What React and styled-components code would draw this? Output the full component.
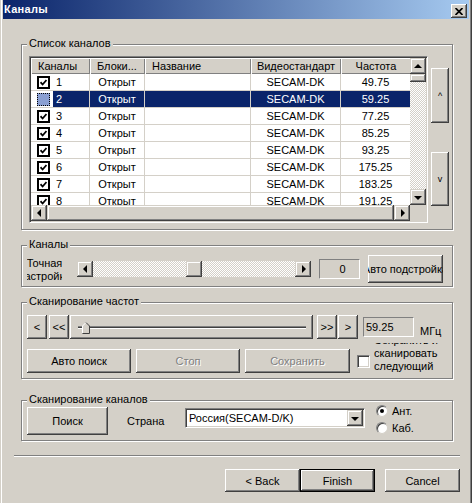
import React from 'react'
import styled, { createGlobalStyle } from 'styled-components'

const FACE = '#d4d0c8'
const SHADOW = '#808080'
const DARK = '#404040'
const NAVY = '#0a246a'
const FONT = '"Liberation Sans", Arial, sans-serif'

const columns = [
    { key: 'ch', title: 'Каналы', w: 59, head: 'left' },
    { key: 'lock', title: 'Блоки...', w: 55, head: 'left' },
    { key: 'name', title: 'Название', w: 106, head: 'left' },
    { key: 'std', title: 'Видеостандарт', w: 90, head: 'center' },
    { key: 'freq', title: 'Частота', w: 70, head: 'center' },
]

const channels = [
    { n: 1, freq: '49.75', on: true },
    { n: 2, freq: '59.25', on: false, selected: true },
    { n: 3, freq: '77.25', on: true },
    { n: 4, freq: '85.25', on: true },
    { n: 5, freq: '93.25', on: true },
    { n: 6, freq: '175.25', on: true },
    { n: 7, freq: '183.25', on: true },
    { n: 8, freq: '191.25', on: true },
]

function App() {
  return (
    <>
      <GlobalStyle />
      <Window>
        <TitleBar>
          <TitleText>Каналы</TitleText>
          <CloseButton>
            <svg width="8" height="7" viewBox="0 0 8 7">
              <path d="M0.5 0 L7.5 7 M7.5 0 L0.5 7" stroke="#000" strokeWidth="1.7" />
            </svg>
          </CloseButton>
        </TitleBar>

        <Body>
          <Group $h={186} $mt={25} $pad="11px 0 0 7px">
            <Caption>Список каналов</Caption>
            <ListRow>
              <ListView>
                <Viewport>
                  <HeaderRow>
                    {columns.map(c => (
                      <HeaderCell key={c.key} $w={c.w} $align={c.head}>{c.title}</HeaderCell>
                    ))}
                  </HeaderRow>
                  {channels.map(ch => (
                    <Row key={ch.n}>
                      <FirstCell $w={columns[0].w}>
                        <ListCheck $selected={ch.selected}>
                          {ch.on && <CheckMark />}
                        </ListCheck>
                        <Highlight $selected={ch.selected}>{ch.n}</Highlight>
                      </FirstCell>
                      <Cell $w={columns[1].w} $selected={ch.selected}>Открыт</Cell>
                      <Cell $w={columns[2].w} $selected={ch.selected}></Cell>
                      <Cell $w={columns[3].w} $selected={ch.selected}>SECAM-DK</Cell>
                      <Cell $w={columns[4].w} $selected={ch.selected}>{ch.freq}</Cell>
                    </Row>
                  ))}
                </Viewport>
                <VScroll>
                  <ScrollArrow><Tri $dir="up" /></ScrollArrow>
                  <Thumb $size={8} />
                  <Track />
                  <ScrollArrow><Tri $dir="down" /></ScrollArrow>
                </VScroll>
                <HScroll>
                  <ScrollArrow><Tri $dir="left" /></ScrollArrow>
                  <Thumb $grow />
                  <ScrollArrow><Tri $dir="right" /></ScrollArrow>
                </HScroll>
                <Corner />
              </ListView>
              <SideButtons>
                <Button $w={18} $h={55} $small>^</Button>
                <Button $w={18} $h={54} $small>v</Button>
              </SideButtons>
            </ListRow>
          </Group>

          <Group $h={42} $mt={15} $pad="9px 0 3px 5px" $row>
            <Caption>Каналы</Caption>
            <FineLabel>
              <span>Точная</span>
              <span>настройка</span>
            </FineLabel>
            <HScrollBar $w={234} $ml={15}>
              <ScrollArrow><Tri $dir="left" /></ScrollArrow>
              <Track $row>
                <Thumb $size={16} $offset={93} />
              </Track>
              <ScrollArrow><Tri $dir="right" /></ScrollArrow>
            </HScrollBar>
            <ValueBox $w={41} $h={20} $ml={8} $center>0</ValueBox>
            <Button $w={75} $h={28} $ml={8}>Авто подстройка</Button>
          </Group>

          <Group $h={77} $mt={15} $pad="12px 0 0 5px">
            <Caption>Сканирование частот</Caption>
            <ToolRow>
              <Button $w={20} $h={24}>&lt;</Button>
              <Button $w={20} $h={24} $ml={2}>&lt;&lt;</Button>
              <Slider>
                <SliderLine>
                  <SliderThumb width="8" height="12" viewBox="0 0 8 12">
                    <path d="M0.5 11.5 V4 L4 0.5 L7.5 4 V11.5 Z" fill={FACE} />
                    <path d="M0.5 11 V4 L4 0.5" stroke="#fff" fill="none" />
                    <path d="M4 0.5 L7.5 4 V11.5 H0.5" stroke={DARK} fill="none" />
                  </SliderThumb>
                </SliderLine>
              </Slider>
              <Button $w={20} $h={24} $ml={4}>&gt;&gt;</Button>
              <Button $w={20} $h={24} $ml={1}>&gt;</Button>
              <ValueBox $w={51} $h={20} $ml={5}>59.25</ValueBox>
              <Unit>МГц</Unit>
            </ToolRow>
            <ToolRow>
              <Button $w={104} $h={24}>Авто поиск</Button>
              <Button $w={104} $h={24} $ml={5} disabled>Стоп</Button>
              <Button $w={105} $h={24} $ml={5} disabled>Сохранить</Button>
              <Check $ml={7} />
              <CheckText>
                <span>Сохранить и</span>
                <span>сканировать</span>
                <span>следующий</span>
              </CheckText>
            </ToolRow>
          </Group>

          <Group $h={41} $mt={21} $pad="6px 0 0 5px" $row $top>
            <Caption>Сканирование каналов</Caption>
            <Button $w={81} $h={28}>Поиск</Button>
            <FieldLabel>Страна</FieldLabel>
            <Combo>
              <ComboText>Россия(SECAM-D/K)</ComboText>
              <ScrollArrow><Tri $dir="down" /></ScrollArrow>
            </Combo>
            <Radios>
              <RadioItem><Radio $on /><span>Ант.</span></RadioItem>
              <RadioItem><Radio /><span>Каб.</span></RadioItem>
            </Radios>
          </Group>

          <Separator />

          <Footer>
            <Button $w={75} $h={23}>&lt; Back</Button>
            <Button $w={75} $h={23} $default>Finish</Button>
            <Button $w={75} $h={23} $ml={10}>Cancel</Button>
          </Footer>
        </Body>
      </Window>
    </>
  )
}

export default App

const GlobalStyle = createGlobalStyle`
    html, body {
        margin: 0;
        padding: 0;
        background: ${FACE};
    }
    body {
        font-family: ${FONT};
        font-size: 11px;
        color: #000;
    }
`

const Window = styled.div`
    width: 472px;
    height: 503px;
    box-sizing: border-box;
    padding: 0 3px;
    background: ${FACE};
    box-shadow: inset 1px 0 0 ${FACE}, inset 2px 0 0 #fff, inset -1px 0 0 ${DARK}, inset -2px 0 0 ${SHADOW};
    overflow: hidden;
`

const TitleBar = styled.div`
    height: 19px;
    display: flex;
    justify-content: space-between;
    padding: 0 2px 0 1px;
    background: linear-gradient(to right, ${NAVY}, #a6caf0);
`

const TitleText = styled.div`
    color: #fff;
    font-weight: bold;
    font-size: 11px;
    line-height: 19px;
    letter-spacing: 0.3px;
`

const CloseButton = styled.div`
    align-self: flex-end;
    margin-bottom: 1px;
    width: 16px;
    height: 14px;
    box-sizing: border-box;
    display: flex;
    align-items: center;
    justify-content: center;
    background: ${FACE};
    box-shadow: inset -1px -1px 0 ${DARK}, inset 1px 1px 0 #fff, inset -2px -2px 0 ${SHADOW};
`

const Body = styled.div`
    display: flex;
    flex-direction: column;
    padding-left: 18px;
`

const Group = styled.div`
    position: relative;
    box-sizing: border-box;
    flex-shrink: 0;
    width: 432px;
    height: ${p => p.$h}px;
    margin-top: ${p => p.$mt}px;
    padding: ${p => p.$pad};
    border: 1px solid ${SHADOW};
    box-shadow: 1px 1px 0 #fff, inset 1px 1px 0 #fff;
    display: flex;
    flex-direction: ${p => p.$row ? 'row' : 'column'};
    align-items: ${p => p.$top ? 'flex-start' : p.$row ? 'center' : 'stretch'};
    gap: ${p => p.$row ? 0 : 10}px;
`

const Caption = styled.div`
    position: absolute;
    top: -8px;
    left: 5px;
    padding: 0 2px;
    line-height: 13px;
    background: ${FACE};
`

const ListRow = styled.div`
    display: flex;
    gap: 3px;
`

const ListView = styled.div`
    box-sizing: border-box;
    width: 399px;
    height: 167px;
    border: 1px solid;
    border-color: ${SHADOW} #fff #fff ${SHADOW};
    box-shadow: inset 1px 1px 0 ${DARK}, inset -1px -1px 0 ${FACE};
    padding: 1px;
    background: #fff;
    display: grid;
    grid-template-columns: 379px 16px;
    grid-template-rows: 147px 16px;
`

const Viewport = styled.div`
    overflow: hidden;
    background: #fff;
`

const HeaderRow = styled.div`
    display: flex;
    width: 380px;
`

const HeaderCell = styled.div`
    box-sizing: border-box;
    flex: 0 0 ${p => p.$w}px;
    height: 16px;
    line-height: 16px;
    padding-left: ${p => p.$align === 'left' ? 7 : 0}px;
    text-align: ${p => p.$align};
    white-space: nowrap;
    overflow: hidden;
    background: ${FACE};
    box-shadow: inset 1px 1px 0 #fff, inset -1px -1px 0 ${SHADOW};
`

const Row = styled.div`
    display: flex;
    width: 380px;
`

const Cell = styled.div`
    box-sizing: border-box;
    flex: 0 0 ${p => p.$w}px;
    height: 17px;
    line-height: 16px;
    text-align: center;
    white-space: nowrap;
    overflow: hidden;
    border-right: 1px solid ${FACE};
    border-bottom: 1px solid ${FACE};
    background: ${p => p.$selected ? NAVY : '#fff'};
    color: ${p => p.$selected ? '#fff' : '#000'};
`

const FirstCell = styled.div`
    box-sizing: border-box;
    flex: 0 0 ${p => p.$w}px;
    height: 17px;
    display: flex;
    align-items: center;
    padding-left: 6px;
    border-right: 1px solid ${FACE};
    border-bottom: 1px solid ${FACE};
`

const ListCheck = styled.div`
    box-sizing: border-box;
    width: 13px;
    height: 13px;
    flex-shrink: 0;
    display: flex;
    align-items: center;
    justify-content: center;
    border: ${p => p.$selected ? `1px dotted #000` : '2px solid #000'};
    background: ${p => p.$selected ? '#8a9fd2' : '#fff'};
`

const CheckMark = () => (
    <svg width="7" height="7" viewBox="0 0 7 7">
        <path d="M0.5 3.2 L2.6 5.5 L6.5 1" stroke="#000" strokeWidth="1.8" fill="none" />
    </svg>
)

const Highlight = styled.div`
    align-self: stretch;
    flex: 1;
    margin-left: 3px;
    padding-left: 3px;
    line-height: 16px;
    background: ${p => p.$selected ? NAVY : 'transparent'};
    color: ${p => p.$selected ? '#fff' : '#000'};
`

const checker = `
    background-color: #fff;
    background-image: repeating-conic-gradient(${FACE} 0 25%, #fff 0 50%);
    background-size: 2px 2px;
`

const VScroll = styled.div`
    display: flex;
    flex-direction: column;
    ${checker}
`

const HScroll = styled.div`
    display: flex;
    background: ${FACE};
`

const HScrollBar = styled.div`
    display: flex;
    flex-shrink: 0;
    width: ${p => p.$w}px;
    height: 16px;
    margin-left: ${p => p.$ml || 0}px;
`

const Corner = styled.div`
    background: ${FACE};
`

const scrollBevel = `
    background: ${FACE};
    box-shadow: inset -1px -1px 0 ${DARK}, inset 1px 1px 0 ${FACE}, inset -2px -2px 0 ${SHADOW}, inset 2px 2px 0 #fff;
`

const ScrollArrow = styled.div`
    box-sizing: border-box;
    flex: 0 0 16px;
    width: 16px;
    height: 16px;
    display: flex;
    align-items: center;
    justify-content: center;
    ${scrollBevel}
`

const Tri = styled.div`
    width: 0;
    height: 0;
    border-style: solid;
    border-color: transparent;
    ${p => p.$dir === 'up' && `border-width: 0 4px 4px 4px; border-bottom-color: #000; margin-top: -1px;`}
    ${p => p.$dir === 'down' && `border-width: 4px 4px 0 4px; border-top-color: #000; margin-top: 1px;`}
    ${p => p.$dir === 'left' && `border-width: 4px 4px 4px 0; border-right-color: #000; margin-left: -1px;`}
    ${p => p.$dir === 'right' && `border-width: 4px 0 4px 4px; border-left-color: #000; margin-left: 1px;`}
`

const Track = styled.div`
    flex: 1;
    display: ${p => p.$row ? 'flex' : 'block'};
    ${checker}
`

const Thumb = styled.div`
    box-sizing: border-box;
    flex: ${p => p.$grow ? '1' : `0 0 ${p.$size}px`};
    margin-left: ${p => p.$offset || 0}px;
    ${scrollBevel}
`

const SideButtons = styled.div`
    display: flex;
    flex-direction: column;
    gap: 29px;
    padding-top: 12px;
`

const Button = styled.button`
    box-sizing: border-box;
    flex-shrink: 0;
    width: ${p => p.$w}px;
    height: ${p => p.$h}px;
    margin: 0 0 0 ${p => p.$ml || 0}px;
    padding: 0;
    display: flex;
    align-items: center;
    justify-content: center;
    overflow: hidden;
    white-space: nowrap;
    font-family: ${FONT};
    font-size: ${p => p.$small ? 9 : 11}px;
    color: ${p => p.disabled ? SHADOW : '#000'};
    text-shadow: ${p => p.disabled ? '1px 1px 0 #fff' : 'none'};
    background: ${FACE};
    border: ${p => p.$default ? '1px solid #000' : 'none'};
    box-shadow: inset -1px -1px 0 ${DARK}, inset 1px 1px 0 #fff, inset -2px -2px 0 ${SHADOW};
`

const FineLabel = styled.div`
    flex-shrink: 0;
    width: 35px;
    height: 28px;
    display: flex;
    flex-direction: column;
    align-items: center;
    justify-content: center;
    line-height: 13px;
    overflow: hidden;
    white-space: nowrap;
    margin-top: 2px;
`

const ValueBox = styled.div`
    box-sizing: border-box;
    flex-shrink: 0;
    width: ${p => p.$w}px;
    height: ${p => p.$h}px;
    margin-left: ${p => p.$ml || 0}px;
    padding-left: ${p => p.$center ? 6 : 2}px;
    border: 1px solid;
    border-color: ${SHADOW} #fff #fff ${SHADOW};
    line-height: 18px;
    text-align: ${p => p.$center ? 'center' : 'left'};
`

const ToolRow = styled.div`
    display: flex;
    align-items: center;
    height: 24px;
`

const Slider = styled.div`
    box-sizing: border-box;
    flex-shrink: 0;
    width: 243px;
    height: 24px;
    margin-left: 1px;
    padding: 0 7px 0 8px;
    display: flex;
    align-items: center;
    background: ${FACE};
    box-shadow: inset -1px -1px 0 ${DARK}, inset 1px 1px 0 #fff, inset -2px -2px 0 ${SHADOW};
`

const SliderLine = styled.div`
    position: relative;
    flex: 1;
    box-sizing: border-box;
    height: 3px;
    border-top: 1px solid ${SHADOW};
    border-bottom: 1px solid #fff;
    background: ${DARK};
`

const SliderThumb = styled.svg`
    position: absolute;
    left: 4px;
    top: -5px;
`

const Unit = styled.div`
    margin-left: 6px;
    padding-top: 8px;
`

const Check = styled.div`
    box-sizing: border-box;
    flex-shrink: 0;
    width: 13px;
    height: 13px;
    margin-left: ${p => p.$ml || 0}px;
    background: #fff;
    border: 1px solid;
    border-color: ${SHADOW} #fff #fff ${SHADOW};
    box-shadow: inset 1px 1px 0 ${DARK}, inset -1px -1px 0 ${FACE};
`

const CheckText = styled.div`
    box-sizing: border-box;
    height: 36px;
    margin-left: 4px;
    display: flex;
    flex-direction: column;
    justify-content: flex-end;
    padding-bottom: 6px;
    line-height: 13px;
    overflow: hidden;
    white-space: nowrap;
`

const FieldLabel = styled.div`
    flex-shrink: 0;
    width: 58px;
    margin-left: 19px;
    line-height: 28px;
`

const Combo = styled.div`
    box-sizing: border-box;
    flex-shrink: 0;
    width: 180px;
    height: 20px;
    margin-top: 1px;
    display: flex;
    align-items: center;
    border: 1px solid;
    border-color: ${SHADOW} #fff #fff ${SHADOW};
    box-shadow: inset 1px 1px 0 ${DARK}, inset -1px -1px 0 ${FACE};
    padding: 1px;
    background: #fff;
`

const ComboText = styled.div`
    flex: 1;
    padding-left: 2px;
    white-space: nowrap;
`

const Radios = styled.div`
    display: flex;
    flex-direction: column;
    gap: 5px;
    margin: -2px 0 0 11px;
`

const RadioItem = styled.div`
    display: flex;
    align-items: center;
    gap: 4px;
    height: 12px;
`

const Radio = styled.div`
    box-sizing: border-box;
    width: 12px;
    height: 12px;
    border-radius: 50%;
    background: #fff;
    border: 1px solid;
    border-color: ${SHADOW} ${FACE} ${FACE} ${SHADOW};
    box-shadow: inset 1px 1px 0 ${DARK};
    display: flex;
    align-items: center;
    justify-content: center;

    &::after {
        content: '';
        width: 4px;
        height: 4px;
        border-radius: 50%;
        background: ${p => p.$on ? '#000' : 'transparent'};
    }
`

const Separator = styled.div`
    width: 446px;
    height: 0;
    margin: 14px 0 0 -7px;
    border-top: 1px solid ${SHADOW};
    border-bottom: 1px solid #fff;
`

const Footer = styled.div`
    display: flex;
    margin: 12px 0 0 204px;
`
